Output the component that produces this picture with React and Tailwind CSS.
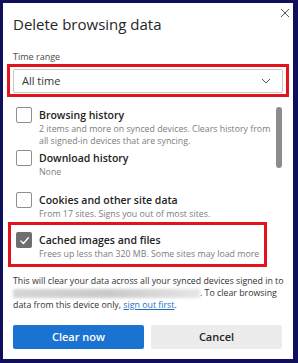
import React from 'react';

const font = { fontFamily: '"Open Sans", "Noto Sans", sans-serif' };

function Box({ checked }) {
  if (checked) {
    return (
      <div className="w-[16px] h-[16px] shrink-0 rounded-[2px] bg-[#6e6e6e] flex items-center justify-center">
        <svg width="11" height="11" viewBox="0 0 12 12" fill="none">
          <path d="M2 6.4 4.8 9.2 10.2 3" stroke="#fff" strokeWidth="1.5" strokeLinecap="round" strokeLinejoin="round" />
        </svg>
      </div>
    );
  }
  return <div className="w-[16px] h-[16px] shrink-0 rounded-[2px] border border-[#8f8f8f] bg-white" />;
}

function Row({ label, desc, checked, className = '' }) {
  return (
    <div className={`flex gap-[7px] ${className}`}>
      <Box checked={checked} />
      <div className="min-w-0">
        <div className="text-[10.5px] leading-[16px] font-semibold text-[#222] whitespace-nowrap">{label}</div>
        <div className="text-[8.8px] leading-[12px] text-[#7d7d7d]">{desc}</div>
      </div>
    </div>
  );
}

export default function App() {
  return (
    <div
      style={font}
      className="relative w-[298px] h-[363px] bg-white border-[#0f0f5c] border-t-[3px] border-l-[3px] border-r-[5px] border-b-[4px] overflow-hidden"
    >
      {/* close */}
      <button className="absolute top-[5px] right-[3px] w-[10px] h-[10px]">
        <svg width="10" height="10" viewBox="0 0 10 10">
          <path d="M1 1 9 9M9 1 1 9" stroke="#555" strokeWidth="1" />
        </svg>
      </button>

      <div className="px-[10px] pt-[11px]">
        <h1 className="text-[15px] leading-[20px] text-[#262626] font-normal">Delete browsing data</h1>

        <div className="mt-[16px] text-[9px] leading-[14px] text-[#4a4a4a]">Time range</div>

        {/* Zeitraum */}
        <div className="-mx-[6px] border-[3px] border-[#e3121b] px-[3px] pt-[2px] pb-[1px]">
          <div className="h-[24px] border border-[#c8c8c8] rounded-[2px] flex items-center justify-between pl-[8px] pr-[11px]">
            <span className="text-[11px] text-[#333]">All time</span>
            <svg width="10" height="6" viewBox="0 0 10 6">
              <path d="M1 1 5 5 9 1" stroke="#555" strokeWidth="1" fill="none" />
            </svg>
          </div>
        </div>

        {/* Liste */}
        <div className="relative mt-[10px]">
          <div className="absolute top-0 right-[1px] w-[6px] h-[61px] rounded-full bg-[#8c8c8c]" />
          <div className="pl-[3px] w-[262px]">
            <Row label="Browsing history" desc="2 items and more on synced devices. Clears history from all signed-in devices that are syncing." />
            <Row className="mt-[3px]" label="Download history" desc="None" />
            <Row className="mt-[14px]" label="Cookies and other site data" desc="From 17 sites. Signs you out of most sites." />
          </div>
          <div className="mt-[2px] -ml-[5px] w-[259px] border-[3px] border-[#e3121b] pl-[5px] pt-[7px] pb-[4px]">
            <Row checked label="Cached images and files" desc="Frees up less than 320 MB. Some sites may load more" />
          </div>
        </div>

        <p className="mt-[8px] text-[8.8px] leading-[12px] text-[#333] whitespace-nowrap">
          This will clear your data across all your synced devices signed in to
          <br />
          <span className="inline-block align-middle w-[187px] h-[9px] bg-gradient-to-r from-[#d6d6d6] via-[#c9c9c9] to-[#e6e6e6] blur-[1.5px]" />
          . To clear browsing
          <br />
          data from this device only,{' '}
          <a href="#" className="text-[#1a6fc7] underline">sign out first</a>.
        </p>

        <div className="mt-[14px] flex gap-[7px]">
          <button className="w-[131px] h-[24px] bg-[#1b73d1] text-white text-[11px] font-semibold rounded-[2px]">Clear now</button>
          <button className="w-[131px] h-[24px] bg-[#ececec] text-[#262626] text-[11px] font-semibold rounded-[2px]">Cancel</button>
        </div>
      </div>
    </div>
  );
}
